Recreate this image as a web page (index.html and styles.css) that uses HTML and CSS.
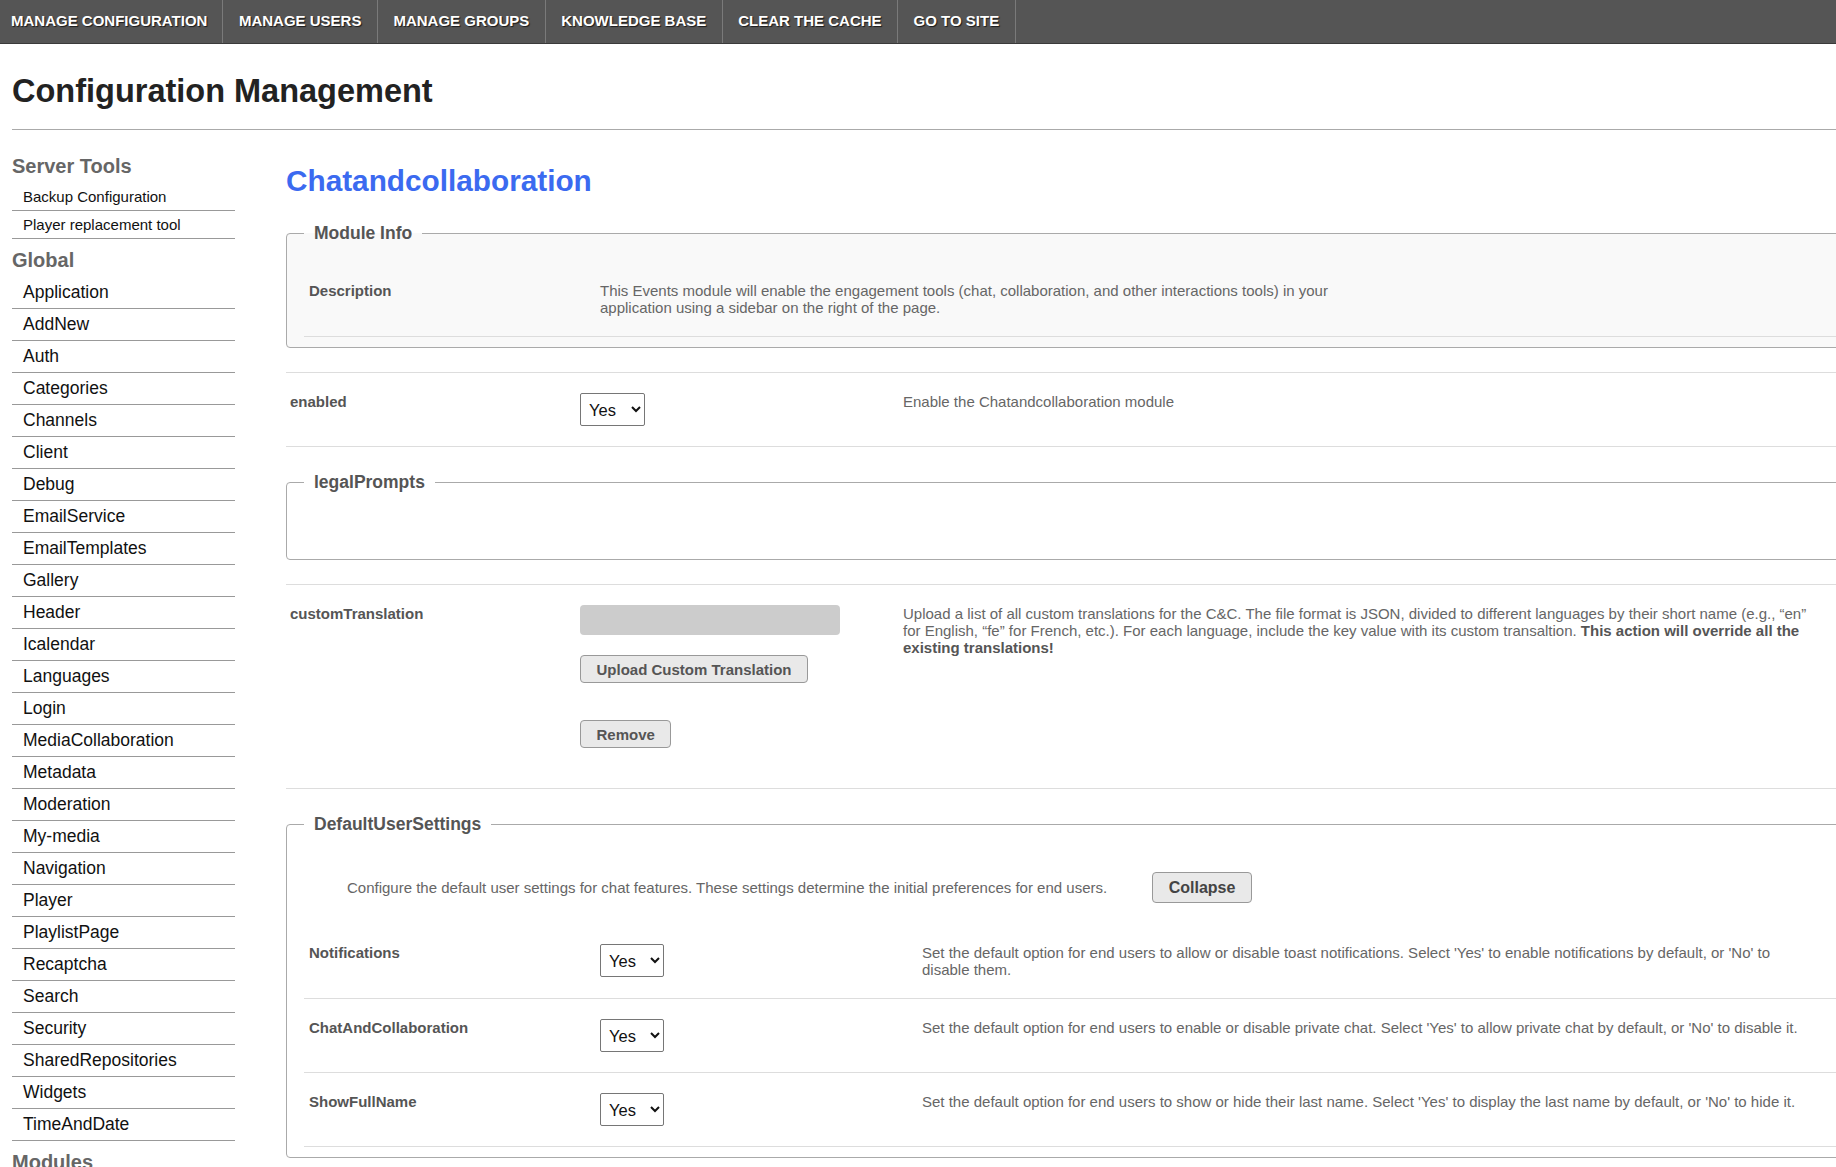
FILE: index.html
```html
<!DOCTYPE html>
<html lang="en">
<head>
<meta charset="utf-8">
<title>Configuration Management</title>
<link rel="stylesheet" href="styles.css">
</head>
<body>
<nav class="topnav">
  <a class="nav-item first" href="#">MANAGE CONFIGURATION</a>
  <a class="nav-item" href="#">MANAGE USERS</a>
  <a class="nav-item" href="#">MANAGE GROUPS</a>
  <a class="nav-item" href="#">KNOWLEDGE BASE</a>
  <a class="nav-item" href="#">CLEAR THE CACHE</a>
  <a class="nav-item" href="#">GO TO SITE</a>
</nav>
<header class="page-head">
  <h1>Configuration Management</h1>
</header>
<div class="layout">
  <aside class="sidebar">
    <h3 class="side-title first">Server Tools</h3>
    <ul class="side-list small">
      <li>Backup Configuration</li>
      <li>Player replacement tool</li>
    </ul>
    <h3 class="side-title">Global</h3>
    <ul class="side-list">
      <li>Application</li>
      <li>AddNew</li>
      <li>Auth</li>
      <li>Categories</li>
      <li>Channels</li>
      <li>Client</li>
      <li>Debug</li>
      <li>EmailService</li>
      <li>EmailTemplates</li>
      <li>Gallery</li>
      <li>Header</li>
      <li>Icalendar</li>
      <li>Languages</li>
      <li>Login</li>
      <li>MediaCollaboration</li>
      <li>Metadata</li>
      <li>Moderation</li>
      <li>My-media</li>
      <li>Navigation</li>
      <li>Player</li>
      <li>PlaylistPage</li>
      <li>Recaptcha</li>
      <li>Search</li>
      <li>Security</li>
      <li>SharedRepositories</li>
      <li>Widgets</li>
      <li>TimeAndDate</li>
    </ul>
    <h3 class="side-title">Modules</h3>
  </aside>
  <main class="main">
    <h2 class="module-title">Chatandcollaboration</h2>

    <div class="block fs-block first">
      <fieldset class="fs info">
        <legend>Module Info</legend>
        <div class="fs-rows top">
          <div class="irow two">
            <div class="label">Description</div>
            <div class="desc info-desc">This Events module will enable the engagement tools (chat, collaboration, and other interactions tools) in your application using a sidebar on the right of the page.</div>
          </div>
        </div>
      </fieldset>
    </div>

    <div class="block row">
      <div class="label">enabled</div>
      <div class="ctrl"><select class="sel"><option>Yes</option><option>No</option></select></div>
      <div class="desc">Enable the Chatandcollaboration module</div>
    </div>

    <div class="block fs-block">
      <fieldset class="fs empty">
        <legend>legalPrompts</legend>
      </fieldset>
    </div>

    <div class="block row tall">
      <div class="label">customTranslation</div>
      <div class="ctrl stack">
        <div class="file-box"></div>
        <button class="btn">Upload Custom Translation</button>
        <button class="btn remove">Remove</button>
      </div>
      <div class="desc">Upload a list of all custom translations for the C&amp;C. The file format is JSON, divided to different languages by their short name (e.g., “en” for English, “fe” for French, etc.). For each language, include the key value with its custom transaltion. <strong>This action will override all the existing translations!</strong></div>
    </div>

    <div class="block fs-block last">
      <fieldset class="fs">
        <legend>DefaultUserSettings</legend>
        <div class="fs-intro">
          <span class="intro-text">Configure the default user settings for chat features. These settings determine the initial preferences for end users.</span>
          <button class="btn collapse">Collapse</button>
        </div>
        <div class="fs-rows">
          <div class="irow">
            <div class="label">Notifications</div>
            <div class="ctrl"><select class="sel"><option>Yes</option><option>No</option></select></div>
            <div class="desc">Set the default option for end users to allow or disable toast notifications. Select 'Yes' to enable notifications by default, or 'No' to disable them.</div>
          </div>
          <div class="irow">
            <div class="label">ChatAndCollaboration</div>
            <div class="ctrl"><select class="sel"><option>Yes</option><option>No</option></select></div>
            <div class="desc">Set the default option for end users to enable or disable private chat. Select 'Yes' to allow private chat by default, or 'No' to disable it.</div>
          </div>
          <div class="irow">
            <div class="label">ShowFullName</div>
            <div class="ctrl"><select class="sel"><option>Yes</option><option>No</option></select></div>
            <div class="desc">Set the default option for end users to show or hide their last name. Select 'Yes' to display the last name by default, or 'No' to hide it.</div>
          </div>
        </div>
      </fieldset>
    </div>
  </main>
</div>
</body>
</html>
```
FILE: styles.css
```css
html, body {
  margin: 0;
  padding: 0;
  overflow: hidden;
  background: #fff;
}
body {
  font-family: "Liberation Sans", Arial, sans-serif;
  color: #222;
  width: 1880px;
}

/* top navigation */
.topnav {
  display: flex;
  height: 43px;
  background: #555555;
  border-bottom: 1px solid #3a3a3a;
}
.nav-item {
  display: block;
  padding: 0 15.5px;
  line-height: 41px;
  font-size: 15px;
  font-weight: bold;
  color: #fff;
  text-decoration: none;
  text-shadow: 1px 1px 1px rgba(0, 0, 0, 0.7);
  border-right: 1px solid #7a7a7a;
}
.nav-item.first {
  padding-left: 11px;
  padding-right: 15px;
}

/* page heading */
.page-head {
  margin-left: 12px;
  border-bottom: 1px solid #aaa;
}
.page-head h1 {
  margin: 29px 0 0;
  padding-bottom: 19px;
  font-size: 32.5px;
  line-height: 37px;
  font-weight: bold;
  color: #222;
}

/* layout */
.layout {
  display: grid;
  grid-template-columns: 223px 1fr;
  column-gap: 51px;
  padding-left: 12px;
}

/* sidebar */
.sidebar {
  padding-top: 16px;
}
.side-title {
  margin: 10px 0 5px;
  font-size: 20px;
  line-height: 23px;
  font-weight: bold;
  color: #666;
}
.side-title.first {
  margin-top: 9px;
}
.side-list {
  list-style: none;
  margin: 0;
  padding: 0;
}
.side-list li {
  height: 31px;
  line-height: 31px;
  padding-left: 11px;
  font-size: 17.5px;
  color: #111;
  border-bottom: 1px solid #999;
}
.side-list.small li {
  height: 27px;
  line-height: 27px;
  font-size: 15px;
}

/* main */
.main {
  min-width: 0;
}
.module-title {
  margin: 34px 0 26px;
  font-size: 29.75px;
  line-height: 33px;
  font-weight: bold;
  color: #3b6af0;
}
.block {
  border-bottom: 1px solid #ddd;
}
.fs-block {
  padding: 25px 0 24px;
}
.fs-block.first {
  padding-top: 0;
}
.fs-block.last {
  border-bottom: none;
  padding-bottom: 0;
}
.fs {
  margin: 0;
  padding: 0 17px 10px;
  border: 1px solid #aaa;
  border-radius: 4px;
  background: #fff;
}
.fs.info {
  background: #f9f9f9;
}
.fs.empty {
  min-height: 76px;
}
.fs legend {
  padding: 0 10px;
  font-size: 17.5px;
  line-height: 20px;
  font-weight: bold;
  color: #555;
}
.fs-rows.top {
  padding-top: 19px;
}

.row {
  display: grid;
  grid-template-columns: 294px 323px 1fr;
  padding: 20px 0;
}
.row.tall {
  padding-bottom: 40px;
}
.row .label {
  padding-left: 4px;
}
.irow {
  display: grid;
  grid-template-columns: 296px 322px 1fr;
  padding: 20px 0;
  border-bottom: 1px solid #ddd;
}
.irow.two {
  grid-template-columns: 296px 1fr;
}
.irow .label {
  padding-left: 5px;
}
.label {
  font-size: 15px;
  font-weight: bold;
  color: #555;
}
.desc {
  font-size: 15px;
  color: #666;
  max-width: 920px;
}
.irow .desc {
  max-width: 885px;
}
.desc.info-desc {
  max-width: 770px;
}
.desc strong {
  color: #555;
}

.sel {
  width: 65px;
  height: 33px;
  font-family: "Liberation Sans", Arial, sans-serif;
  font-size: 16.5px;
  color: #111;
  background: #fff;
  border: 1px solid #767676;
  border-radius: 2px;
  padding: 0 4px;
}
.irow .sel {
  width: 64px;
}

.stack {
  display: flex;
  flex-direction: column;
  align-items: flex-start;
}
.file-box {
  width: 260px;
  height: 30px;
  background: #ccc;
  border-radius: 4px;
}
.btn {
  height: 28px;
  padding: 0 15.5px;
  font-family: "Liberation Sans", Arial, sans-serif;
  font-size: 15px;
  font-weight: bold;
  color: #555;
  background: #e9e9e9;
  border: 1px solid #999;
  border-radius: 4px;
}
.stack .btn {
  margin-top: 20px;
}
.stack .btn.remove {
  margin-top: 37px;
}
.fs-intro {
  display: flex;
  align-items: center;
  gap: 45px;
  padding: 38px 0 21px 43px;
}
.intro-text {
  font-size: 15px;
  color: #666;
}
.btn.collapse {
  height: 31px;
  font-size: 16px;
  color: #444;
}
```
